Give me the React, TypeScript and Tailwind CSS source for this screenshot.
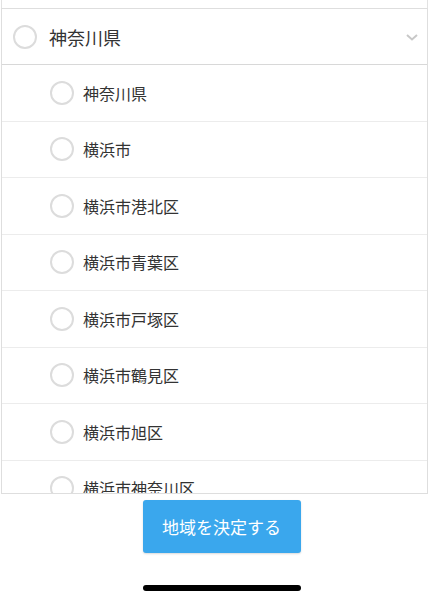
const cities = [
  '神奈川県',
  '横浜市',
  '横浜市港北区',
  '横浜市青葉区',
  '横浜市戸塚区',
  '横浜市鶴見区',
  '横浜市旭区',
  '横浜市神奈川区',
  '横浜市緑区',
];

function Radio() {
  return <span className="w-6 h-6 shrink-0 rounded-full border-2 border-[#dcdcdc] bg-white" />;
}

export default function App() {
  return (
    <div
      className="w-[429px] h-[600px] bg-white flex flex-col text-[#333]"
      style={{ fontFamily: '"Noto Sans CJK JP", "Noto Sans", sans-serif' }}
    >
      <div className="h-[8px] mx-[1px] border-x border-[#e2e2e2]" />
      <div className="h-[486px] overflow-hidden mx-[1px] border-x border-t border-b border-[#dedede]">
        <div className="h-[56px] flex items-center pl-[11px] pr-[6px] border-b border-[#d8d8d8]">
          <Radio />
          <span className="ml-[12px] text-[18px] leading-none flex-1">神奈川県</span>
          <svg width="14" height="10" viewBox="0 0 14 10" className="mr-[2px]">
            <path d="M2 3 L7 7.5 L12 3" fill="none" stroke="#c8c8c8" strokeWidth="2" />
          </svg>
        </div>
        {cities.map((c) => (
          <div
            key={c}
            className="h-[56.5px] flex items-center pl-[48px] border-b border-[#ececec]"
          >
            <Radio />
            <span className="ml-[9px] text-[16px] leading-none">{c}</span>
          </div>
        ))}
      </div>
      <div className="flex justify-center pl-[14px] pt-[6px]">
        <button className="w-[158px] h-[53px] rounded-[3px] bg-[#3aa7ed] text-white text-[17px] shadow-[0_1px_2px_rgba(0,0,0,0.15)]">
          地域を決定する
        </button>
      </div>
      <div className="flex justify-center pl-[14px] mt-[32px]">
        <div className="w-[158px] h-[6px] rounded-full bg-black" />
      </div>
    </div>
  );
}
